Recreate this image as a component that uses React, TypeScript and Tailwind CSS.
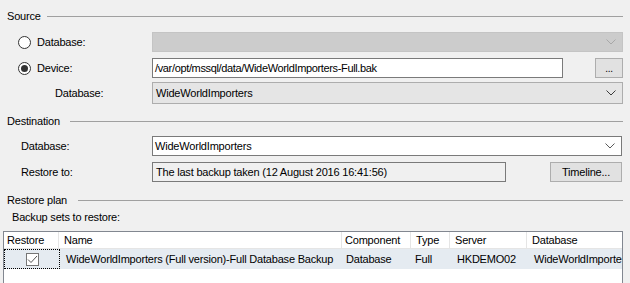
import React from "react";

function Chevron({ color = "#5a5a5a" }: { color?: string }) {
  return (
    <svg width="10" height="6" viewBox="0 0 10 6" className="block">
      <path d="M0.5 0.5 L5 5 L9.5 0.5" fill="none" stroke={color} strokeWidth="1" />
    </svg>
  );
}

function Heading({ text, lineStart }: { text: string; lineStart: number }) {
  return (
    <div className="flex items-center h-[14px]">
      <span className="pl-[7px] leading-[14px]" style={{ width: lineStart }}>{text}</span>
      <div className="flex-1 h-px bg-[#a0a0a0] mr-[7px]" />
    </div>
  );
}

function Radio({ checked }: { checked?: boolean }) {
  return (
    <div className="w-[13px] h-[13px] rounded-full border border-[#333333] bg-white flex items-center justify-center">
      {checked && <div className="w-[7px] h-[7px] rounded-full bg-[#333333]" />}
    </div>
  );
}

export default function App() {
  return (
    <div
      className="w-[630px] h-[283px] bg-[#f0f0f0] overflow-hidden text-[11px] tracking-[-0.2px] text-black"
      style={{ fontFamily: '"Liberation Sans", Arial, sans-serif' }}
    >
      <div className="pt-[9px]">
        <Heading text="Source" lineStart={47} />
      </div>
      {/* Row 1 */}
      <div className="flex items-center h-[20px] mt-[9px]">
        <div className="w-[152px] flex items-center pl-[18px]">
          <Radio />
          <span className="ml-[6px]">Database:</span>
        </div>
        <div className="w-[471px] h-[20px] bg-[#cccccc] border border-[#c4c4c4] flex items-center justify-end pr-[6px]">
          <Chevron color="#a8a8a8" />
        </div>
      </div>
      {/* Row 2 */}
      <div className="flex items-center h-[20px] mt-[6px]">
        <div className="w-[152px] flex items-center pl-[18px]">
          <Radio checked />
          <span className="ml-[6px]">Device:</span>
        </div>
        <div className="w-[411px] h-[20px] bg-white border border-[#7a7a7a] flex items-center pl-[2px] tracking-[-0.35px]">
          /var/opt/mssql/data/WideWorldImporters-Full.bak
        </div>
        <div className="ml-[32px] w-[28px] h-[20px] bg-[#e1e1e1] border border-[#adadad] flex items-center justify-center text-[10px] leading-none pt-[2px]">
          ...
        </div>
      </div>
      {/* Row 3 */}
      <div className="flex items-center h-[22px] mt-[4px]">
        <div className="w-[152px] pl-[55px]">Database:</div>
        <div className="w-[471px] h-[22px] bg-[#e5e5e5] border border-[#adadad] flex items-center justify-between pl-[3px] pr-[6px]">
          <span>WideWorldImporters</span>
          <Chevron color="#3c3c3c" />
        </div>
      </div>

      <div className="mt-[10px]">
        <Heading text="Destination" lineStart={70} />
      </div>
      <div className="flex items-center h-[20px] mt-[8px]">
        <div className="w-[152px] pl-[21px]">Database:</div>
        <div className="w-[470px] h-[20px] bg-white border border-[#7a7a7a] flex items-center justify-between pl-[2px] pr-[6px]">
          <span>WideWorldImporters</span>
          <Chevron color="#5a5a5a" />
        </div>
      </div>
      <div className="flex items-center h-[20px] mt-[6px]">
        <div className="w-[152px] pl-[21px]">Restore to:</div>
        <div className="w-[354px] h-[20px] bg-[#f0f0f0] border border-[#7a7a7a] flex items-center pl-[3px]">
          The last backup taken (12 August 2016 16:41:56)
        </div>
        <div className="ml-[44px] w-[72px] h-[20px] bg-[#e1e1e1] border border-[#adadad] flex items-center justify-center">
          Timeline...
        </div>
      </div>

      <div className="mt-[11px]">
        <Heading text="Restore plan" lineStart={78} />
      </div>
      <div className="pl-[12px] mt-[3px] h-[14px] leading-[14px]">Backup sets to restore:</div>

      <div className="ml-[3px] mt-[7px] w-[620px] h-[60px] bg-white border-t border-l border-r border-[#828790]">
        <div className="flex h-[17px] leading-[17px] border-b border-[#e5e5e5]">
          <div className="w-[55px] pl-[3px] border-r border-[#e5e5e5]">Restore</div>
          <div className="w-[283px] pl-[5px] border-r border-[#e5e5e5]">Name</div>
          <div className="w-[69px] pl-[3px] border-r border-[#e5e5e5]">Component</div>
          <div className="w-[39px] pl-[5px] border-r border-[#e5e5e5]">Type</div>
          <div className="w-[77px] pl-[5px] border-r border-[#e5e5e5]">Server</div>
          <div className="flex-1 pl-[5px] whitespace-nowrap overflow-hidden">Database</div>
        </div>
        <div className="flex h-[20px] items-center bg-[#e5ebf1] whitespace-nowrap">
          <div className="w-[56px] h-[20px] border border-dotted border-black flex items-center justify-center">
            <div className="w-[13px] h-[13px] bg-white border border-[#767676] flex items-center justify-center">
              <svg width="11" height="9" viewBox="0 0 11 9">
                <path d="M1 4.5 L4 7.5 L10 1" fill="none" stroke="#555555" strokeWidth="1" />
              </svg>
            </div>
          </div>
          <div className="w-[282px] pl-[6px] overflow-hidden">WideWorldImporters (Full version)-Full Database Backup</div>
          <div className="w-[69px] pl-[4px]">Database</div>
          <div className="w-[39px] pl-[4px]">Full</div>
          <div className="w-[77px] pl-[7px]">HKDEMO02</div>
          <div className="flex-1 pl-[7px] overflow-hidden">WideWorldImporters</div>
        </div>
      </div>
    </div>
  );
}
